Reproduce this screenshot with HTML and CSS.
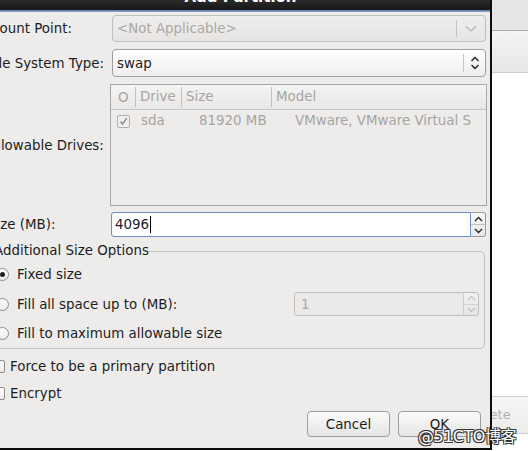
FILE: index.html
```html
<!DOCTYPE html>
<html>
<head>
<meta charset="utf-8">
<link rel="stylesheet" href="styles.css">
</head>
<body>
<div class="screen">
  <div class="dialog">
    <div class="titlebar"><span class="title">Add Partition</span></div>
    <div class="titleline"></div>
    <div class="content">
      <div class="row row-mount">
        <div class="label">Mount Point:</div>
        <div class="combo combo-disabled">
          <span class="combo-text">&lt;Not Applicable&gt;</span>
          <span class="combo-sep"></span>
          <span class="combo-btn">
            <svg width="12" height="8" viewBox="0 0 12 8"><path d="M1 1.5 L6 6 L11 1.5" fill="none" stroke="#b4b2b0" stroke-width="1.2"/></svg>
          </span>
        </div>
      </div>
      <div class="row row-fs">
        <div class="label">File System Type:</div>
        <div class="combo combo-active">
          <span class="combo-text">swap</span>
          <span class="combo-sep"></span>
          <span class="combo-btn">
            <svg width="10" height="14" viewBox="0 0 10 14"><path d="M1.5 5 L5 1.5 L8.5 5 M1.5 9 L5 12.5 L8.5 9" fill="none" stroke="#222" stroke-width="1.4"/></svg>
          </span>
        </div>
      </div>
      <div class="row row-drives">
        <div class="label">Allowable Drives:</div>
        <div class="tree">
          <div class="tree-head">
            <span class="col col-check">O</span>
            <span class="col col-drive">Drive</span>
            <span class="col col-size">Size</span>
            <span class="col col-model">Model</span>
          </div>
          <div class="tree-row">
            <span class="col col-check"><span class="tcheck">
              <svg width="9" height="9" viewBox="0 0 9 9"><path d="M1.5 4.5 L3.6 7 L7.8 1.2" fill="none" stroke="#8a8886" stroke-width="1.4"/></svg>
            </span></span>
            <span class="col col-drive">sda</span>
            <span class="col col-size">81920 MB</span>
            <span class="col col-model">VMware, VMware Virtual S</span>
          </div>
        </div>
      </div>
      <div class="row row-size">
        <div class="label">Size (MB):</div>
        <div class="spin spin-focus">
          <span class="spin-text">4096<span class="caret"></span></span>
          <span class="spin-btns">
            <span class="spin-up"><svg width="9" height="6" viewBox="0 0 9 6"><path d="M1 5 L4.5 1.5 L8 5" fill="none" stroke="#222" stroke-width="1.3"/></svg></span>
            <span class="spin-down"><svg width="9" height="6" viewBox="0 0 9 6"><path d="M1 1 L4.5 4.5 L8 1" fill="none" stroke="#222" stroke-width="1.3"/></svg></span>
          </span>
        </div>
      </div>
      <fieldset class="frame">
        <legend class="frame-title">Additional Size Options</legend>
        <div class="opt opt-fixed">
          <span class="radio radio-on"></span><span class="opt-text">Fixed size</span>
        </div>
        <div class="opt opt-fill">
          <span class="radio"></span><span class="opt-text">Fill all space up to (MB):</span>
          <div class="spin spin-disabled">
            <span class="spin-text">1</span>
            <span class="spin-btns">
              <span class="spin-up"><svg width="9" height="6" viewBox="0 0 9 6"><path d="M1 5 L4.5 1.5 L8 5" fill="none" stroke="#c2c0be" stroke-width="1.2"/></svg></span>
              <span class="spin-down"><svg width="9" height="6" viewBox="0 0 9 6"><path d="M1 1 L4.5 4.5 L8 1" fill="none" stroke="#c2c0be" stroke-width="1.2"/></svg></span>
            </span>
          </div>
        </div>
        <div class="opt opt-max">
          <span class="radio"></span><span class="opt-text">Fill to maximum allowable size</span>
        </div>
      </fieldset>
      <div class="check-row check-primary">
        <span class="checkbox"></span><span class="check-text">Force to be a primary partition</span>
      </div>
      <div class="check-row check-encrypt">
        <span class="checkbox"></span><span class="check-text">Encrypt</span>
      </div>
      <div class="buttons">
        <div class="button">Cancel</div>
        <div class="button">OK</div>
      </div>
    </div>
  </div>
  <div class="behind">
    <div class="behind-top"></div>
    <div class="behind-toolbar"></div>
    <div class="behind-body">
      <div class="behind-btn">Delete</div>
    </div>
  </div>
  <div class="watermark">@51CTO博客</div>
</div>
</body>
</html>
```

FILE: styles.css
```css
html, body {
  margin: 0;
  padding: 0;
  width: 528px;
  height: 451px;
  overflow: hidden;
  background: #ffffff;
}

.screen {
  position: relative;
  display: flex;
  width: 528px;
  height: 451px;
  font-family: "DejaVu Sans", sans-serif;
  font-size: 13.4px;
  color: #1c1c1c;
}

.dialog {
  width: 490px;
  height: 448px;
  flex: none;
  background: #edeceb;
  border-right: 2px solid #0c0c0c;
  border-bottom: 2px solid #0c0c0c;
  display: flex;
  flex-direction: column;
  overflow: hidden;
}

.titlebar {
  height: 10px;
  background: linear-gradient(#2b2b2b, #171717);
  overflow: hidden;
  display: flex;
  justify-content: center;
}

.title {
  font-weight: bold;
  color: #ffffff;
  font-size: 15px;
  line-height: 15px;
  margin-top: -10px;
  margin-left: -9px;
}

.titleline {
  height: 2px;
  background: linear-gradient(#5b7aa8, #8da6c8);
}

.content {
  flex: 1;
  display: flex;
  flex-direction: column;
  margin-left: -12px;
}

.row {
  display: flex;
  align-items: center;
}

.label {
  width: 124px;
  flex: none;
  white-space: nowrap;
}

.row-mount { margin-top: 3px; height: 27px; }
.row-fs { margin-top: 7px; height: 28px; }
.row-drives { margin-top: 7px; height: 122px; }
.row-size { margin-top: 6px; height: 25px; }

/* combos */
.combo {
  width: 374px;
  height: 100%;
  box-sizing: border-box;
  border-radius: 4px;
  display: flex;
  align-items: center;
}
.combo-disabled {
  border: 1px solid #c0bebc;
  background: linear-gradient(#efeeed, #e6e5e4);
  color: #a9a7a5;
}
.combo-active {
  border: 1px solid #a19f9d;
  background: linear-gradient(#ffffff, #efeeed);
}
.combo-text {
  flex: 1;
  padding-left: 4px;
}
.combo-sep {
  width: 1px;
  align-self: stretch;
  margin: 4px 0;
  background: #c7c5c3;
}
.combo-disabled .combo-btn { width: 28px; }
.combo-active .combo-btn { width: 21px; }
.combo-btn {
  display: flex;
  justify-content: center;
  align-items: center;
}

/* tree */
.tree {
  margin-left: -2px;
  width: 377px;
  height: 122px;
  box-sizing: border-box;
  border: 1px solid #a8a6a4;
  background: #edeceb;
  color: #a6a4a2;
}
.tree-head {
  height: 24px;
  display: flex;
  align-items: center;
  background: linear-gradient(#f4f4f3, #e8e7e6);
  border-bottom: 1px solid #c8c6c4;
}
.tree-row {
  height: 20px;
  display: flex;
  align-items: center;
}
.col { box-sizing: border-box; white-space: nowrap; }
.tree-head .col + .col { border-left: 1px solid #c3c1bf; padding-left: 4px; }
.tree-head .col-check { width: 24px; padding-left: 7px; }
.tree-head .col-drive { width: 46px; line-height: 20px; }
.tree-head .col-size { width: 90px; line-height: 20px; }
.tree-head .col-model { line-height: 20px; }
.tree-row .col-check { width: 30px; padding-left: 6px; padding-top: 2px; }
.tree-row .col-drive { width: 58px; }
.tree-row .col-size { width: 96px; }
.tcheck {
  display: inline-flex;
  width: 11px;
  height: 11px;
  border: 1px solid #b3b1af;
  border-radius: 2px;
  background: #f0efee;
  justify-content: center;
  align-items: center;
}

/* spin */
.spin {
  box-sizing: border-box;
  display: flex;
  align-items: stretch;
  border-radius: 3px;
}
.spin-focus {
  margin-left: -1px;
  width: 375px;
  height: 25px;
}
.spin-focus .spin-text {
  flex: 1;
  background: #ffffff;
  border: 1px solid #6a8fc6;
  border-radius: 3px 0 0 3px;
  padding-left: 3px;
  display: flex;
  align-items: center;
}
.caret {
  display: inline-block;
  width: 1px;
  height: 17px;
  background: #000;
  margin-left: 1px;
}
.spin-btns {
  width: 14px;
  display: flex;
  flex-direction: column;
  border: 1px solid #9e9c9a;
  border-left: none;
  border-radius: 0 3px 3px 0;
  background: linear-gradient(#f8f8f7, #e8e7e6);
}
.spin-up, .spin-down {
  flex: 1;
  display: flex;
  justify-content: center;
  align-items: center;
}
.spin-up { border-bottom: 1px solid #c4c2c0; }
.spin-disabled {
  margin-left: auto;
  margin-right: 5px;
  width: 185px;
  height: 24px;
  border: 1px solid #c0bebc;
  background: #ebeae9;
  color: #a9a7a5;
}
.spin-disabled .spin-text {
  flex: 1;
  padding-left: 6px;
  display: flex;
  align-items: center;
}
.spin-disabled .spin-btns {
  border: none;
  border-left: 1px solid #cfcdcb;
  background: linear-gradient(#f1f0ef, #e6e5e4);
}
.spin-disabled .spin-up { border-bottom: 1px solid #d6d4d2; }

/* frame */
.frame {
  margin: 6px 5px 0 -8px;
  padding: 0 0 3px 0;
  border: 1px solid #c3c1bf;
  border-radius: 5px;
  min-width: 0;
}
.frame-title {
  padding: 0;
  margin-left: 13px;
  line-height: 16px;
  color: #1c1c1c;
}
.opt {
  display: flex;
  align-items: center;
  height: 24px;
}
.opt-fixed { margin-top: 3px; }
.opt-fill { margin-top: 6px; }
.opt-max { margin-top: 5px; }
.radio {
  width: 11px;
  height: 11px;
  border: 1px solid #8f8d8b;
  border-radius: 50%;
  background: linear-gradient(#ffffff, #ecebea);
  margin-left: 15px;
  flex: none;
  display: flex;
  justify-content: center;
  align-items: center;
}
.radio-on::after {
  content: "";
  width: 5px;
  height: 5px;
  border-radius: 50%;
  background: #222;
}
.opt-text { margin-left: 8px; white-space: nowrap; }

/* checks */
.check-row {
  display: flex;
  align-items: center;
  height: 20px;
}
.check-primary { margin-top: 7px; }
.check-encrypt { margin-top: 7px; }
.checkbox {
  width: 11px;
  height: 11px;
  border: 1px solid #8f8d8b;
  border-radius: 2px;
  background: linear-gradient(#ffffff, #ecebea);
  margin-left: 4px;
  flex: none;
}
.check-text { margin-left: 5px; }

/* buttons */
.buttons {
  margin-top: 8px;
  display: flex;
  justify-content: flex-end;
  gap: 8px;
  padding-right: 9px;
}
.button {
  width: 83px;
  height: 26px;
  box-sizing: border-box;
  border: 1px solid #a09e9c;
  border-radius: 4px;
  background: linear-gradient(#fbfbfa, #e5e4e2);
  display: flex;
  justify-content: center;
  align-items: center;
}

/* window behind */
.behind {
  flex: 1;
  display: flex;
  flex-direction: column;
  overflow: hidden;
}
.behind-top {
  height: 30px;
  background: #e6e6e5;
  border-bottom: 1px solid #aaaaaa;
}
.behind-toolbar {
  height: 41px;
  background: linear-gradient(#f4f4f3, #e7e7e6);
  border-bottom: 1px solid #cfcfcf;
}
.behind-body {
  flex: 1;
  background: #ffffff;
  position: relative;
}
.behind-btn {
  position: absolute;
  left: -30px;
  top: 323px;
  width: 80px;
  height: 38px;
  box-sizing: border-box;
  border: 1px solid #cfcfcf;
  border-radius: 3px;
  background: linear-gradient(#f6f6f5, #ececeb);
  color: #b0b0b0;
  font-size: 13px;
  line-height: 36px;
  padding-left: 5px;
}

.watermark {
  position: absolute;
  left: 418px;
  top: 423px;
  font-family: "DejaVu Sans", "Noto Sans CJK SC", sans-serif;
  font-size: 16px;
  color: #ffffff;
  text-shadow: -1px -1px 0 #333, 1px -1px 0 #333, -1px 1px 0 #333, 1px 1px 0 #333, 0 0 1px #333;
  white-space: nowrap;
  letter-spacing: -0.5px;
}
```
